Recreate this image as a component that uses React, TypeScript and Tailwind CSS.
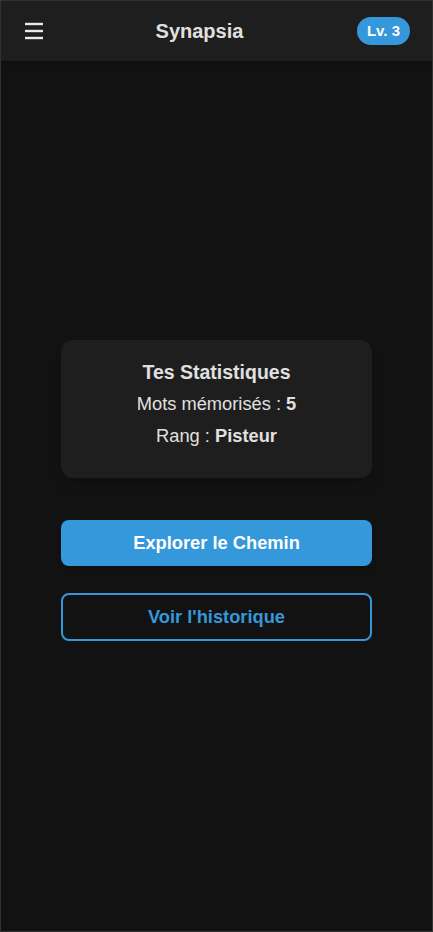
export default function App() {
  return (
    <div
      className="h-[932px] w-full flex flex-col bg-[#121212] border border-[#333333] text-[#e0e0e0]"
      style={{ fontFamily: '"Liberation Sans", Arial, sans-serif' }}
    >
      <header className="h-[60px] flex items-center justify-between pl-[23px] pr-[22px] bg-[#1e1e1e] shadow-md">
        <button type="button" className="w-[20px] h-[20px] flex items-center">
          <svg width="20" height="18" viewBox="0 0 20 18" fill="none" stroke="#e8e8e8" strokeWidth="2.4">
            <line x1="1" y1="2" x2="19" y2="2" />
            <line x1="1" y1="9" x2="19" y2="9" />
            <line x1="1" y1="16" x2="19" y2="16" />
          </svg>
        </button>
        <h1 className="text-[20px] font-bold pr-[2px]">Synapsia</h1>
        <span className="px-[10px] py-[5px] rounded-full bg-[#3498db] text-white text-[15px] font-bold leading-[18px]">
          Lv. 3
        </span>
      </header>

      <main className="flex-1 flex flex-col items-center justify-center px-[60px] pb-[12px]">
        <div className="w-full bg-[#1e1e1e] rounded-xl shadow-lg pt-[21px] pb-[32px] flex flex-col items-center">
          <h2 className="text-[19.5px] font-bold leading-[22px]">Tes Statistiques</h2>
          <p className="mt-[11px] text-[18.3px] leading-[20px]">
            Mots mémorisés : <strong>5</strong>
          </p>
          <p className="mt-[12px] text-[18.3px] leading-[20px]">
            Rang : <strong>Pisteur</strong>
          </p>
        </div>

        <button
          type="button"
          className="mt-[42px] w-full h-[46px] rounded-lg bg-[#3498db] text-white text-[18.3px] font-bold shadow-md"
        >
          Explorer le Chemin
        </button>
        <button
          type="button"
          className="mt-[27px] w-full h-[48px] rounded-lg border-2 border-[#3498db] text-[#3498db] text-[18.3px] font-bold"
        >
          Voir l'historique
        </button>
      </main>
    </div>
  );
}
